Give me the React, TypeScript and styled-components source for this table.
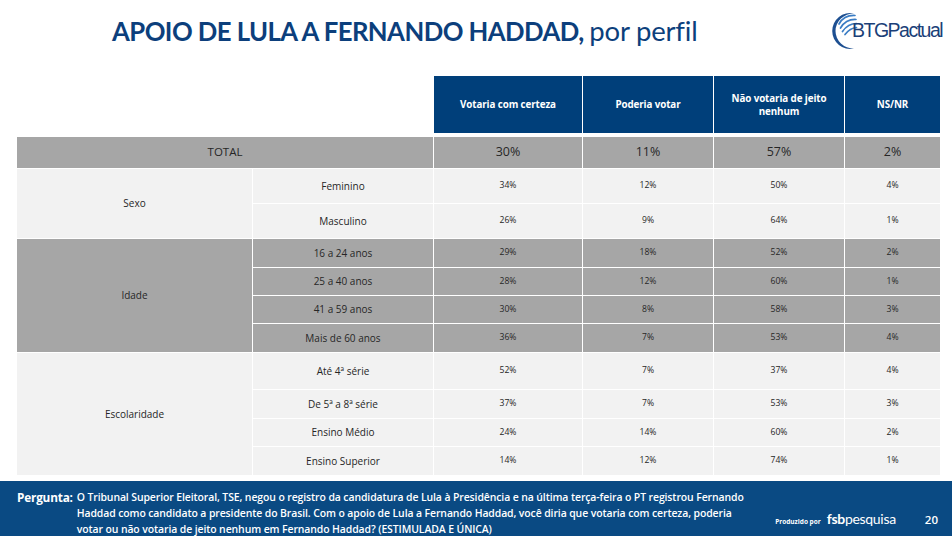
import React from "react";
import styled, { createGlobalStyle, css } from "styled-components";

const Global = createGlobalStyle`
  html, body { margin: 0; padding: 0; background: #ffffff; }
  body { font-family: "Open Sans", "Liberation Sans", sans-serif; }
  * { box-sizing: border-box; }
`;

const Page = styled.div`
  width: 952px;
  height: 536px;
  display: flex;
  flex-direction: column;
  background: #ffffff;
  overflow: hidden;
`;

const TopBar = styled.header`
  height: 76px;
  display: flex;
  justify-content: space-between;
  align-items: flex-start;
  padding-left: 112px;
`;

const Title = styled.h1`
  margin: 14px 0 0;
  font-family: Lato, "Open Sans", sans-serif;
  font-size: 25.7px;
  font-weight: 700;
  color: #0c3f7c;
  letter-spacing: -0.55px;
  white-space: nowrap;
`;

const TitleLight = styled.span`
  font-weight: 400;
  font-size: 27.5px;
  letter-spacing: -0.2px;
`;

const LogoBox = styled.div`
  margin: 5px 8px 0 0;
  width: 124px;
  height: 45px;
  display: flex;
  align-items: center;
`;

const LogoMark = styled.svg`
  width: 40px;
  height: 45px;
  flex: none;
`;

const LogoWord = styled.span`
  margin-left: -8px;
  font-family: "Liberation Sans", Arial, sans-serif;
  font-size: 19.5px;
  letter-spacing: -1.5px;
  color: #1b3f78;
  white-space: nowrap;
  padding-top: 5px;
`;

const Grid = styled.div`
  margin-left: 17px;
  width: 923px;
  display: grid;
  grid-template-columns: 235px 180px 148px 130px 130px 95px;
  grid-template-rows: 57px 2px 31px 34px 34px 28px 27px 27px 28px 36px 28px 27px 28px;
  column-gap: 1px;
  row-gap: 1px;
  background: #ffffff;
`;

type Tone = "blue" | "gray" | "light" | "none";

const tones: Record<Tone, string> = {
  blue: "#003f7a",
  gray: "#a6a6a6",
  light: "#f2f2f2",
  none: "transparent",
};

const Cell = styled.div<{ $tone: Tone; $span?: number; $rows?: number; $size?: number; $bold?: boolean }>`
  display: flex;
  align-items: center;
  justify-content: center;
  text-align: center;
  background: ${(p) => tones[p.$tone]};
  color: ${(p) => (p.$tone === "blue" ? "#ffffff" : "#262626")};
  font-size: ${(p) => p.$size ?? 10}px;
  font-weight: ${(p) => (p.$bold ? 700 : 400)};
  line-height: 1.3;
  ${(p) => p.$span && css`grid-column: span ${p.$span};`}
  ${(p) => p.$rows && css`grid-row: span ${p.$rows};`}
`;

const HeadCell = styled(Cell)`
  padding: 2px 14px 0;
  font-size: 9.8px;
  letter-spacing: -0.1px;
`;

const Spacer = styled.div`
  grid-column: 1 / -1;
`;

const Filler = styled.div`
  flex: 1;
`;

const Footer = styled.footer`
  height: 55px;
  background: #0a4a83;
  color: #ffffff;
  display: flex;
  align-items: flex-start;
  padding: 8px 0 0 17px;
`;

const QLabel = styled.span`
  font-size: 11.8px;
  font-weight: 700;
  line-height: 16px;
  margin-right: 4px;
  letter-spacing: -0.2px;
`;

const QText = styled.p`
  margin: 0;
  font-size: 10.45px;
  font-weight: 600;
  line-height: 16px;
  letter-spacing: -0.1px;
`;

const Credits = styled.div`
  margin-left: auto;
  align-self: flex-end;
  display: flex;
  align-items: baseline;
  padding: 0 14px 9px 0;
`;

const Produced = styled.span`
  font-size: 6.5px;
  font-weight: 700;
  margin-right: 6px;
`;

const Brand = styled.span`
  font-family: Lato, "Open Sans", sans-serif;
  font-size: 14px;
  letter-spacing: -0.3px;
  font-weight: 400;
`;

const BrandBold = styled.span`
  font-weight: 700;
`;

const PageNum = styled.span`
  margin-left: 29px;
  font-size: 11.5px;
  font-weight: 600;
`;

type Row = { label: string; v: number[] };
type Group = { name: string; tone: Tone; rows: Row[] };

const groups: Group[] = [
  {
    name: "Sexo",
    tone: "light",
    rows: [
      { label: "Feminino", v: [34, 12, 50, 4] },
      { label: "Masculino", v: [26, 9, 64, 1] },
    ],
  },
  {
    name: "Idade",
    tone: "gray",
    rows: [
      { label: "16 a 24 anos", v: [29, 18, 52, 2] },
      { label: "25 a 40 anos", v: [28, 12, 60, 1] },
      { label: "41 a 59 anos", v: [30, 8, 58, 3] },
      { label: "Mais de 60 anos", v: [36, 7, 53, 4] },
    ],
  },
  {
    name: "Escolaridade",
    tone: "light",
    rows: [
      { label: "Até 4ª série", v: [52, 7, 37, 4] },
      { label: "De 5ª a 8ª série", v: [37, 7, 53, 3] },
      { label: "Ensino Médio", v: [24, 14, 60, 2] },
      { label: "Ensino Superior", v: [14, 12, 74, 1] },
    ],
  },
];

const headers = ["Votaria com certeza", "Poderia votar", "Não votaria de jeito nenhum", "NS/NR"];
const totals = [30, 11, 57, 2];

function BtgLogo() {
  return (
    <LogoBox>
      <LogoMark viewBox="0 0 40 45">
        <path d="M34 8.4 A18 18 0 1 0 34 43.6 A18.5 17.6 0 0 1 34 8.4 Z" fill="#1d4f91" />
        <g fill="none" stroke="#3a7cc4" strokeWidth="1.7" strokeLinecap="round">
          <path d="M19 19 Q24 10 35 10.5" />
          <path d="M20.5 23 Q26 14 36 14.5" />
          <path d="M22.5 26.5 Q28 18.5 36.5 18.5" />
          <path d="M25 29.5 Q30 23 36.5 22.5" />
        </g>
      </LogoMark>
      <LogoWord>BTGPactual</LogoWord>
    </LogoBox>
  );
}

export default function App() {
  return (
    <Page>
      <Global />
      <TopBar>
        <Title>
          APOIO DE LULA A FERNANDO HADDAD, <TitleLight>por perfil</TitleLight>
        </Title>
        <BtgLogo />
      </TopBar>
      <Grid>
        <Cell $tone="none" />
        <Cell $tone="none" />
        {headers.map((h) => (
          <HeadCell key={h} $tone="blue" $bold>
            {h}
          </HeadCell>
        ))}
        <Spacer />
        <Cell $tone="gray" $span={2} $size={11.5}>
          TOTAL
        </Cell>
        {totals.map((t, i) => (
          <Cell key={i} $tone="gray" $size={12.5}>
            {t}%
          </Cell>
        ))}
        {groups.map((g) => (
          <React.Fragment key={g.name}>
            <Cell $tone={g.tone} $rows={g.rows.length} $size={10}>
              {g.name}
            </Cell>
            {g.rows.map((r) => (
              <React.Fragment key={r.label}>
                <Cell $tone={g.tone} $size={10}>
                  {r.label}
                </Cell>
                {r.v.map((v, i) => (
                  <Cell key={i} $tone={g.tone} $size={8.6}>
                    {v}%
                  </Cell>
                ))}
              </React.Fragment>
            ))}
          </React.Fragment>
        ))}
      </Grid>
      <Filler />
      <Footer>
        <QLabel>Pergunta:</QLabel>
        <QText>
          O Tribunal Superior Eleitoral, TSE, negou o registro da candidatura de Lula à Presidência e na última terça-feira o PT registrou Fernando
          <br />
          Haddad como candidato a presidente do Brasil. Com o apoio de Lula a Fernando Haddad, você diria que votaria com certeza, poderia
          <br />
          votar ou não votaria de jeito nenhum em Fernando Haddad? (ESTIMULADA E ÚNICA)
        </QText>
        <Credits>
          <Produced>Produzido por</Produced>
          <Brand>
            <BrandBold>fsb</BrandBold>pesquisa
          </Brand>
          <PageNum>20</PageNum>
        </Credits>
      </Footer>
    </Page>
  );
}
